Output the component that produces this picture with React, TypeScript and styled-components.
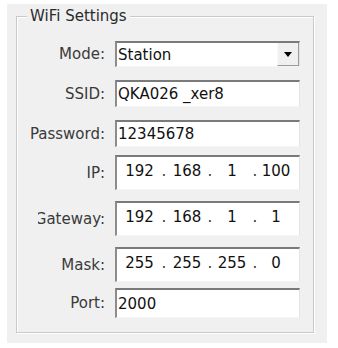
import React from 'react';
import styled, { createGlobalStyle } from 'styled-components';

const GlobalStyle = createGlobalStyle`
  html, body {
    margin: 0;
    padding: 0;
    background: #fff;
  }
  body {
    font-family: 'DejaVu Sans', 'Liberation Sans', sans-serif;
    font-size: 15px;
  }
`;

type Field =
  | { label: string; kind: 'combo' | 'text'; value: string; mt: number; h: number; clip?: boolean }
  | { label: string; kind: 'ip'; parts: string[]; mt: number; h: number; clip?: boolean };

const fields: Field[] = [
  { label: 'Mode:', kind: 'combo', value: 'Station', mt: 15, h: 26 },
  { label: 'SSID:', kind: 'text', value: 'QKA026 _xer8', mt: 13, h: 27 },
  { label: 'Password:', kind: 'text', value: '12345678', mt: 13, h: 27 },
  { label: 'IP:', kind: 'ip', parts: ['192', '168', '1', '100'], mt: 8, h: 35 },
  { label: 'Gateway:', kind: 'ip', parts: ['192', '168', '1', '1'], mt: 11, h: 35, clip: true },
  { label: 'Mask:', kind: 'ip', parts: ['255', '255', '255', '0'], mt: 11, h: 35 },
  { label: 'Port:', kind: 'text', value: '2000', mt: 6, h: 30 },
];

const App: React.FC = () => {
  return (
    <>
      <GlobalStyle />
      <Panel>
        <Group>
          <Legend>WiFi Settings</Legend>
          {fields.map(f => (
            <Row key={f.label} $mt={f.mt} $h={f.h}>
              <Label $clip={f.clip}>
                <span>{f.label}</span>
              </Label>
              {f.kind === 'combo' && (
                <Combo>
                  <ComboText>{f.value}</ComboText>
                  <DropButton>
                    <Arrow />
                  </DropButton>
                </Combo>
              )}
              {f.kind === 'text' && (
                <TextBox>
                  <span>{f.value}</span>
                </TextBox>
              )}
              {f.kind === 'ip' && (
                <IpBox>
                  {f.parts.map((p, i) => (
                    <React.Fragment key={i}>
                      {i > 0 && <IpDot>.</IpDot>}
                      <IpPart>{p}</IpPart>
                    </React.Fragment>
                  ))}
                </IpBox>
              )}
            </Row>
          ))}
        </Group>
      </Panel>
    </>
  );
};

export default App;

// Styled

const Panel = styled.div`
  box-sizing: border-box;
  margin: 4px 0 0 7px;
  width: 320px;
  height: 339px;
  padding: 2px 0 0 9px;
  background: #f0f0f0;
`;

const Group = styled.fieldset`
  box-sizing: border-box;
  width: 298px;
  margin: 0;
  padding: 0 13px 14px 0;
  min-width: 0;
  border: 1px solid #c9c9c9;
  box-shadow: 1px 1px 0 #fff, inset 1px 1px 0 #fff;
`;

const Legend = styled.legend`
  margin-left: 10px;
  padding: 0 3px;
  line-height: 20px;
  font-size: 15px;
  color: #2b2b2b;
  background: #f0f0f0;
`;

const Row = styled.div<{ $mt: number; $h: number }>`
  display: grid;
  grid-template-columns: 88px 185px;
  column-gap: 10px;
  margin-top: ${p => p.$mt}px;
  height: ${p => p.$h}px;
`;

const Label = styled.div<{ $clip?: boolean }>`
  display: flex;
  align-items: center;
  justify-content: flex-end;
  overflow: hidden;
  white-space: nowrap;
  color: #3a3a3a;
  ${p => (p.$clip ? 'margin-left: 21px;' : '')}
`;

const Sunken = styled.div`
  box-sizing: border-box;
  display: flex;
  align-items: center;
  height: 100%;
  background: #fff;
  border-style: solid;
  border-width: 2px 1px 1px 2px;
  border-color: #7a7a7a #e3e3e3 #f4f4f4 #8c8c8c;
  color: #111;
  white-space: nowrap;
  overflow: hidden;
`;

const TextBox = styled(Sunken)`
  padding-left: 1px;
`;

const Combo = styled(Sunken)`
  padding-left: 1px;
  justify-content: space-between;
`;

const ComboText = styled.span`
  flex: 1;
`;

const DropButton = styled.div`
  box-sizing: border-box;
  display: flex;
  align-items: center;
  justify-content: center;
  width: 22px;
  height: 100%;
  background: #f0f0f0;
  border-left: 1px solid #fafafa;
  border-right: 1px solid #9a9a9a;
  border-bottom: 1px solid #9a9a9a;
`;

const Arrow = styled.div`
  width: 0;
  height: 0;
  border-left: 4px solid transparent;
  border-right: 4px solid transparent;
  border-top: 5px solid #000;
`;

const IpBox = styled(Sunken)`
  display: grid;
  grid-template-columns: 41px 8px 38px 8px 36px 10px 32px;
  align-items: center;
  padding-left: 2px;
  padding-bottom: 4px;
`;

const IpPart = styled.span`
  text-align: center;
`;

const IpDot = styled.span`
  text-align: center;
  color: #333;
`;
